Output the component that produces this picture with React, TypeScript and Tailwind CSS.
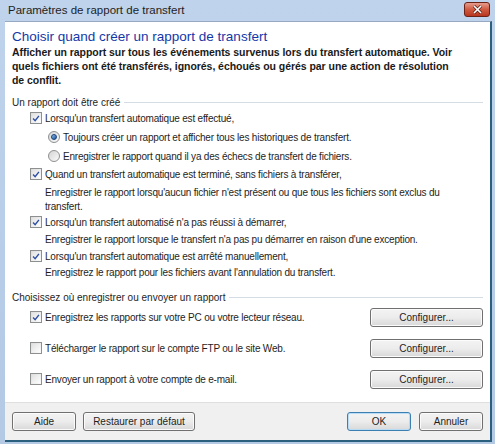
import React from 'react'

const font = { fontFamily: '"Liberation Sans", Arial, sans-serif' }

const Check = ({ checked }: { checked?: boolean }) => (
  <span className="w-[12px] h-[12px] shrink-0 border border-[#8e8f8f] bg-gradient-to-br from-[#dcdcdc] to-[#fbfbfb] p-[1px] flex items-center justify-center">
    <span className="w-full h-full bg-gradient-to-br from-[#e2e2e2] to-[#fdfdfd] flex items-center justify-center">
      {checked && (
        <svg width="9" height="9" viewBox="0 0 9 9">
          <path d="M1.2 4.6 L3.5 7 L7.8 1.6" fill="none" stroke="#2c4ea3" strokeWidth="1.6" />
        </svg>
      )}
    </span>
  </span>
)

const Radio = ({ checked }: { checked?: boolean }) => (
  <span className="w-[12px] h-[12px] shrink-0 rounded-full border border-[#8e8f8f] bg-gradient-to-br from-[#d4d4d4] to-[#fbfbfb] flex items-center justify-center">
    {checked && <span className="w-[6px] h-[6px] rounded-full bg-gradient-to-br from-[#8cc4f0] to-[#1b4f9a] border border-[#1a3f7a]" />}
  </span>
)

const Btn = ({ label, w, focus }: { label: string; w: string; focus?: boolean }) => (
  <button
    className={`${w} h-[19px] rounded-[3px] border ${
      focus ? 'border-[#3c7fb1] shadow-[inset_0_0_0_1px_#b8dcf5]' : 'border-[#707070] shadow-[inset_0_0_0_1px_#fbfbfb]'
    } bg-gradient-to-b from-[#f3f3f3] via-[#ececec] to-[#d8d8d8] text-[10px] text-[#1e1e1e] flex items-center justify-center`}
  >
    {label}
  </button>
)

const Section = ({ title }: { title: string }) => (
  <div className="flex items-center gap-[4px] h-[14px] text-[10px] text-[#1e1e1e]">
    <span>{title}</span>
    <span className="flex-1 h-px bg-[#d5dde4]" />
  </div>
)

const Row = ({ children, mt, radio }: { children: React.ReactNode; mt: string; radio?: boolean }) => (
  <div className={`flex items-center gap-[3px] h-[14px] ${mt} ${radio ? 'pl-[18px]' : ''}`}>{children}</div>
)

export default function App() {
  return (
    <div className="w-[495px] h-[444px] bg-gradient-to-b from-[#bfd3ec] to-[#b3c9e4] flex flex-col pl-[5px] pr-[3px] pb-[2px]" style={font}>
      {/* title bar */}
      <div className="h-[21px] shrink-0 flex items-center justify-between -ml-[5px] pl-[8px] pr-[2px]">
        <span className="text-[11.5px] text-[#1e1e1e]">Paramètres de rapport de transfert</span>
        <span className="w-[26px] h-[15px] -mt-[3px] rounded-[3px] border border-[#6b2318] bg-gradient-to-b from-[#e59c8c] via-[#cf5a40] to-[#b8351f] flex items-center justify-center">
          <svg width="11" height="9" viewBox="0 0 11 9">
            <path d="M2 1 L9 8 M9 1 L2 8" stroke="#5a1a10" strokeWidth="3" />
            <path d="M2 1 L9 8 M9 1 L2 8" stroke="#ffffff" strokeWidth="1.6" />
          </svg>
        </span>
      </div>

      {/* body */}
      <div className="flex-1 flex flex-col bg-white border-t border-[#96a9c0] border-r-2 border-r-[#2a5f7e] border-b-2 border-b-[#2a5f7e]">
        <div className="flex-1 flex flex-col pl-[7px] pr-[7px]">
          <div className="text-[13.5px] text-[#1438a8] mt-[7px] leading-[16px] h-[16px]">Choisir quand créer un rapport de transfert</div>
          <div className="text-[10.5px] font-bold text-[#1a1a1a] leading-[14px] tracking-[-0.05px]">
            Afficher un rapport sur tous les événements survenus lors du transfert automatique. Voir
            <br />
            quels fichiers ont été transférés, ignorés, échoués ou gérés par une action de résolution
            <br />
            de conflit.
          </div>

          <div className="mt-[8px]">
            <Section title="Un rapport doit être créé" />
          </div>

          <div className="flex flex-col text-[10px] tracking-[-0.2px] text-[#1e1e1e] pl-[18px]">
            <Row mt="mt-[2px]">
              <Check checked />
              <span>Lorsqu'un transfert automatique est effectué,</span>
            </Row>
            <Row mt="mt-[5px]" radio>
              <Radio checked />
              <span>Toujours créer un rapport et afficher tous les historiques de transfert.</span>
            </Row>
            <Row mt="mt-[5px]" radio>
              <Radio />
              <span>Enregistrer le rapport quand il ya des échecs de transfert de fichiers.</span>
            </Row>

            <Row mt="mt-[4px]">
              <Check checked />
              <span>Quand un transfert automatique est terminé, sans fichiers à transférer,</span>
            </Row>
            <div className="pl-[15px] mt-[5px] leading-[14px]">
              Enregistrer le rapport lorsqu'aucun fichier n'est présent ou que tous les fichiers sont exclus du
              <br />
              transfert.
            </div>

            <Row mt="mt-[1px]">
              <Check checked />
              <span>Lorsqu'un transfert automatisé n'a pas réussi à démarrer,</span>
            </Row>
            <div className="pl-[15px] mt-[4px] leading-[14px]">
              Enregistrer le rapport lorsque le transfert n'a pas pu démarrer en raison d'une exception.
            </div>

            <Row mt="mt-[2px]">
              <Check checked />
              <span>Lorsqu'un transfert automatique est arrêté manuellement,</span>
            </Row>
            <div className="pl-[15px] mt-[3px] leading-[14px]">
              Enregistrez le rapport pour les fichiers avant l'annulation du transfert.
            </div>
          </div>

          <div className="mt-[10px]">
            <Section title="Choisissez où enregistrer ou envoyer un rapport" />
          </div>

          <div className="flex flex-col gap-[11px] mt-[3px] text-[10px] text-[#1e1e1e]">
            {[
              { label: 'Enregistrez les rapports sur votre PC ou votre lecteur réseau.', checked: true },
              { label: 'Télécharger le rapport sur le compte FTP ou le site Web.', checked: false },
              { label: 'Envoyer un rapport à votre compte de e-mail.', checked: false },
            ].map((r) => (
              <div key={r.label} className="flex items-center gap-[3px] pl-[18px] h-[20px]">
                <Check checked={r.checked} />
                <span className="flex-1 tracking-[-0.2px]">{r.label}</span>
                <Btn label="Configurer..." w="w-[113px]" />
              </div>
            ))}
          </div>
        </div>

        {/* footer */}
        <div className="h-[38px] shrink-0 bg-[#f0f0f0] border-t border-[#dfdfdf] flex items-center justify-between pl-[7px] pr-[7px]">
          <div className="flex gap-[7px]">
            <Btn label="Aide" w="w-[64px]" />
            <Btn label="Restaurer par défaut" w="w-[112px]" />
          </div>
          <div className="flex gap-[8px]">
            <Btn label="OK" w="w-[64px]" focus />
            <Btn label="Annuler" w="w-[64px]" />
          </div>
        </div>
      </div>
    </div>
  )
}
